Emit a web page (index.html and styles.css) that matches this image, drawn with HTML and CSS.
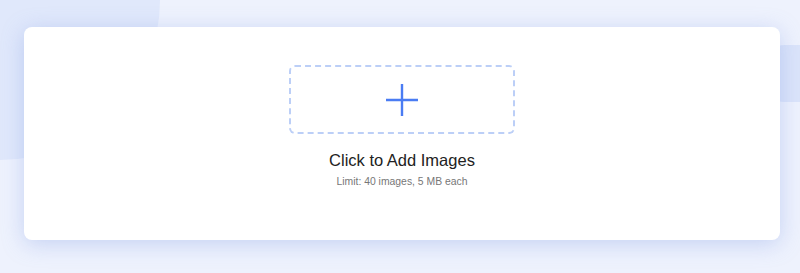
FILE: index.html
```html
<!DOCTYPE html>
<html lang="en">
<head>
  <meta charset="UTF-8" />
  <meta name="viewport" content="width=device-width, initial-scale=1" />
  <title>Add Images</title>
  <link rel="stylesheet" href="styles.css">
</head>
<body>
<div class="blob blob-left"></div>
<div class="blob blob-right"></div>

<main class="page">
  <section class="card">
    <div class="dropzone">
      <svg class="plus" width="34" height="34" viewBox="0 0 34 34" aria-hidden="true">
        <path d="M17 1v32M1 17h32" stroke="#4a7cf3" stroke-width="2.4" fill="none" />
      </svg>
    </div>
    <h2 class="title">Click to Add Images</h2>
    <p class="hint">Limit: 40 images, 5 MB each</p>
  </section>
</main>
</body>
</html>
```

FILE: styles.css
```css
html, body {
  margin: 0; padding: 0; height: 100%;
  font-family: Arial, "Liberation Sans", sans-serif;
  background: #eef2fd;
  overflow: hidden;
}
.blob {
  position: absolute;
  background: #e0e8fb;
}
.blob-left {
  left: -160px; top: -160px;
  width: 320px; height: 320px;
  border-radius: 50%;
}
.blob-right {
  right: -40px; top: 45px;
  width: 70px; height: 57px;
  border-radius: 14px;
  background: #dbe4fa;
}
.page {
  position: relative;
  padding: 27px 20px 33px 24px;
}
.card {
  height: 213px;
  background: #fff;
  border-radius: 8px;
  box-shadow: 0 4px 22px rgba(120, 150, 225, 0.35);
  display: flex;
  flex-direction: column;
  align-items: center;
  padding-top: 38px;
  box-sizing: border-box;
}
.dropzone {
  width: 226px;
  height: 69px;
  box-sizing: border-box;
  border: 2px dashed #bccff7;
  border-radius: 6px;
  display: flex;
  align-items: center;
  justify-content: center;
}
.title {
  margin: 17px 0 0;
  font-size: 16.5px;
  font-weight: normal;
  color: #222;
}
.hint {
  margin: 6px 0 0;
  font-size: 10.4px;
  color: #777;
}
```
